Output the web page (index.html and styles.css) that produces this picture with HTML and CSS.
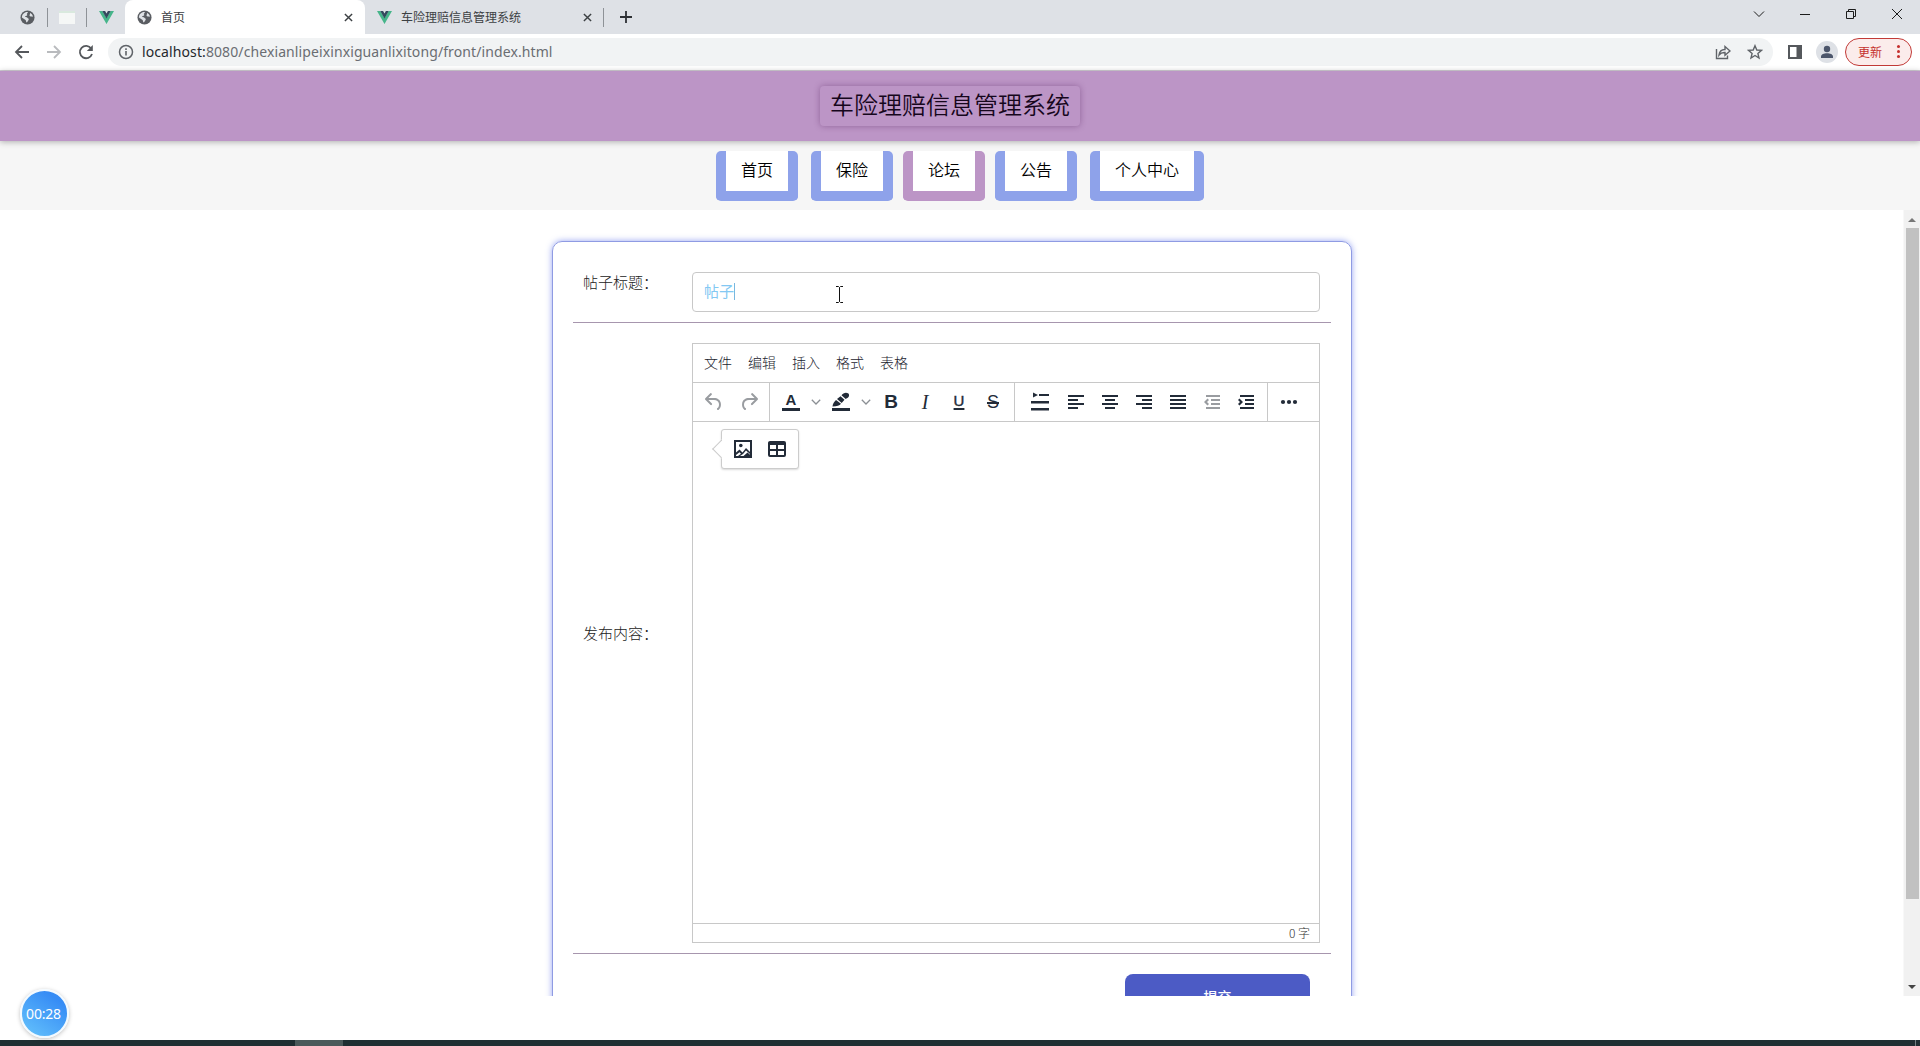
FILE: index.html
```html
<!DOCTYPE html>
<html lang="zh-CN">
<head>
  <meta charset="utf-8">
  <title>首页</title>
  <link rel="stylesheet" href="styles.css">
</head>
<body>
  <svg class="sprite">
    <symbol id="globe" viewBox="0 0 16 16"><circle cx="8" cy="8" r="7.500" fill="#5a5d62"/><path d="M3 4.500C5 2.500 7 2 8.500 2.300c-.2 1-1.300 1.300-1.200 2.200.9.400.6 1.500-.4 1.600-.7.600-1.500.4-1.600 1.300 1.200.2 2.800.1 3.100 1.500 1 .5 1.200 1.100.6 2-.8.600-.9 1.800-1.900 2.500-.9-.5-.3-2-1.200-2.800C4.700 9.800 3.200 9 2 8c0-1.400.3-2.500 1-3.500zM10.500 3c1.800.8 3 2.300 3.300 4-1 .5-1.400-.3-2.300 0-1-.2-1.600-1-1.200-1.900.6-.5.500-1.300.2-2.100z" fill="#dfe2e6"/></symbol>
    <symbol id="vue" viewBox="0 0 16 16"><path d="M0 1h3.500L8 8.500 12.500 1H16L8 15z" fill="#46b58a"/><path d="M3.500 1h3L8 3.600 9.500 1h3L8 9z" fill="#34495e"/></symbol>
    <symbol id="close" viewBox="0 0 10 10"><path d="M1 1l8 8M9 1L1 9" stroke="#3c4043" stroke-width="1.600"/></symbol>
    <symbol id="down" viewBox="0 0 10 10"><path d="M.8 2.800L5 7l4.200-4.200" fill="none" stroke="#8b8f94" stroke-width="1.300"/></symbol>
  </svg>

  <!-- Browser tabs -->
  <div class="tabs">
    <div class="pin"><svg width="15" height="15"><use href="#globe"/></svg></div>
    <div class="pin"><span class="sheet"></span></div>
    <div class="pin last"><svg width="15" height="15"><use href="#vue"/></svg></div>
    <div class="tab active">
      <svg width="15" height="15"><use href="#globe"/></svg><span>首页</span>
      <svg width="9" height="9"><use href="#close"/></svg>
    </div>
    <div class="tab">
      <svg width="15" height="15"><use href="#vue"/></svg><span>车险理赔信息管理系统</span>
      <svg width="9" height="9"><use href="#close"/></svg>
    </div>
    <div class="plus"><svg width="12" height="12" viewBox="0 0 12 12"><path d="M6 0v12M0 6h12" stroke="#2d3034" stroke-width="1.800"/></svg></div>
    <div class="win">
      <svg width="12" height="12" viewBox="0 0 12 12"><path d="M1 3.500l5 5 5-5"/></svg>
      <svg width="12" height="12" viewBox="0 0 12 12"><path d="M1 6.500h10"/></svg>
      <svg width="12" height="12" viewBox="0 0 12 12"><path d="M1.500 3.500h7v7h-7zM3.500 3.500v-2h7v7h-2"/></svg>
      <svg width="12" height="12" viewBox="0 0 12 12"><path d="M1 1l10 10M11 1L1 11"/></svg>
    </div>
  </div>

  <!-- Address bar -->
  <div class="toolbar">
    <svg class="nav-btn" width="16" height="16" viewBox="0 0 16 16"><path d="M15 8H2M8 2L2 8l6 6"/></svg>
    <svg class="nav-btn off" width="16" height="16" viewBox="0 0 16 16"><path d="M1 8h13M8 2l6 6-6 6"/></svg>
    <svg class="nav-btn" width="16" height="16" viewBox="0 0 16 16"><path d="M13.200 4.500A6.200 6.200 0 1 0 14 10"/><path d="M14.800 1v6h-6z" fill="#55585c" stroke="none"/></svg>
    <div class="address">
      <svg width="16" height="16" viewBox="0 0 16 16"><circle cx="8" cy="8" r="6.500" fill="none" stroke="#5f6368" stroke-width="1.500"/><path d="M8 7v4.500M8 4.300v1.600" stroke="#5f6368" stroke-width="1.600"/></svg>
      <span class="url"><b>localhost:</b>8080/chexianlipeixinxiguanlixitong/front/index.html</span>
      <svg class="share" width="16" height="16" viewBox="0 0 16 16"><path d="M1.500 5v9.500h11v-3M4 11c.5-4 3-5.500 6-5.500V2.500l5 4.500-5 4.300V8.500C7 8.300 5.500 9 4 11z"/></svg>
      <svg class="star" width="16" height="16" viewBox="0 0 16 16"><path d="M8 1.700l1.800 4.300 4.700.4-3.600 3 1.100 4.600L8 11.500 4 14l1.100-4.600-3.600-3 4.700-.4z"/></svg>
    </div>
    <svg class="panel" width="14" height="14" viewBox="0 0 14 14"><path d="M0 0h14v14H0zM2 2v10h6.500V2z" fill="#55585c" fill-rule="evenodd"/></svg>
    <svg class="avatar" width="22" height="22" viewBox="0 0 22 22"><circle cx="11" cy="11" r="11" fill="#dee1e6"/><circle cx="11" cy="8" r="3.200" fill="#4c566b"/><path d="M5 17v-1.500c0-4.500 12-4.500 12 0V17z" fill="#4c566b"/></svg>
    <div class="update">更新<i></i></div>
  </div>

  <div class="header"><h1>车险理赔信息管理系统</h1></div>

  <div class="menu">
    <a>首页</a>
    <a class="wide-gap">保险</a>
    <a class="current">论坛</a>
    <a>公告</a>
    <a class="wide-gap">个人中心</a>
  </div>

  <div class="frame">
    <div class="content">
      <div class="card">
        <div class="row title-row">
          <label>帖子标题：</label>
          <div class="input">帖子<span class="caret"></span>
            <svg class="ibeam" width="9" height="17" viewBox="0 0 9 17"><path d="M1 .5h2.500l1 1 1-1H8M4.500 1.500v14M1 16.500h2.500l1-1 1 1H8"/></svg>
          </div>
        </div>
        <div class="row editor-row">
          <label>发布内容：</label>
          <div class="editor">
            <div class="menubar"><span>文件</span><span>编辑</span><span>插入</span><span>格式</span><span>表格</span></div>
            <div class="tools">
              <div class="group history">
                <svg class="off" viewBox="0 0 24 24"><path d="M6.400 8H12c3.700 0 6.200 2 6.800 5.100.6 2.700-.4 5.600-2.300 6.800a1 1 0 0 1-1-1.800c1.100-.6 1.800-2.700 1.400-4.600-.5-2.100-2.100-3.500-4.900-3.500H6.400l3.300 3.300a1 1 0 1 1-1.400 1.400l-5-5a1 1 0 0 1 0-1.400l5-5a1 1 0 0 1 1.400 1.400L6.400 8z"/></svg>
                <svg class="off" viewBox="0 0 24 24"><path transform="matrix(-1 0 0 1 24 0)" d="M6.400 8H12c3.700 0 6.200 2 6.800 5.100.6 2.700-.4 5.600-2.300 6.800a1 1 0 0 1-1-1.800c1.100-.6 1.800-2.700 1.400-4.600-.5-2.100-2.100-3.500-4.900-3.500H6.400l3.300 3.300a1 1 0 1 1-1.400 1.400l-5-5a1 1 0 0 1 0-1.400l5-5a1 1 0 0 1 1.400 1.400L6.400 8z"/></svg>
              </div>
              <div class="group format">
                <span class="letter color">A</span>
                <svg class="arrow"><use href="#down"/></svg>
                <svg viewBox="0 0 24 24"><path d="M3 18h18v3H3zM3.500 16.500c.2-2.500 1.500-4.500 3.500-6.500l5 3.800c-1.500 2-4 2.700-8.500 2.700zM8 9l3.500-2.800 4 3.600-2.800 3.200zM12.500 5.300C14 3 17 1.800 19 3.300s1.300 4.300-2.300 5.700z"/></svg>
                <svg class="arrow"><use href="#down"/></svg>
                <span class="letter bold">B</span>
                <span class="letter italic">I</span>
                <span class="letter under">U</span>
                <span class="letter strike">S</span>
              </div>
              <div class="group align">
                <svg viewBox="0 0 24 24"><path d="M5 2.500l5 2.500-5 2.500zM11 4h10v2H11zM3 11h18v2.500H3zM3 18h18v2.500H3z"/></svg>
                <svg viewBox="0 0 24 24"><path d="M4 5h16v2H4zM4 9h10v2H4zM4 13h16v2H4zM4 17h10v2H4z"/></svg>
                <svg viewBox="0 0 24 24"><path d="M4 5h16v2H4zM7 9h10v2H7zM4 13h16v2H4zM7 17h10v2H7z"/></svg>
                <svg viewBox="0 0 24 24"><path d="M4 5h16v2H4zM10 9h10v2H10zM4 13h16v2H4zM10 17h10v2H10z"/></svg>
                <svg viewBox="0 0 24 24"><path d="M4 5h16v2H4zM4 9h16v2H4zM4 13h16v2H4zM4 17h16v2H4z"/></svg>
                <svg class="off" viewBox="0 0 24 24"><path d="M6 5h14v2H6zM11 9h9v2h-9zM11 13h9v2h-9zM6 17h14v2H6zM7.500 8.500L9 10l-2 2 2 2-1.500 1.500L4 12z"/></svg>
                <svg viewBox="0 0 24 24"><path d="M6 5h14v2H6zM11 9h9v2h-9zM11 13h9v2h-9zM6 17h14v2H6zM5.500 8.500L4 10l2 2-2 2 1.500 1.500L9 12z"/></svg>
              </div>
              <div class="group more">
                <svg viewBox="0 0 24 24"><circle cx="6" cy="12" r="2.100"/><circle cx="12" cy="12" r="2.100"/><circle cx="18" cy="12" r="2.100"/></svg>
              </div>
            </div>
            <div class="textarea">
              <div class="quickbar">
                <svg viewBox="0 0 24 24"><path fill-rule="evenodd" d="M3 3h18v18H3zM5 5v10.500l3.500-3 3 3L15 11l4 4V5zM5 18v1h2l3-2.200-1.500-1.500zM9 19h3.500l4-3.600 2.500 2.400V17l-4-3.500L12 17z"/><circle cx="9.800" cy="8.500" r="1.800"/></svg>
                <svg viewBox="0 0 24 24"><path fill-rule="evenodd" d="M5 4h14a2 2 0 0 1 2 2v12a2 2 0 0 1-2 2H5a2 2 0 0 1-2-2V6c0-1.100.9-2 2-2zM5 8v4h6V8zm8 0v4h6V8zm-8 6v4h6v-4zm8 0v4h6v-4z"/></svg>
              </div>
            </div>
            <div class="statusbar">0 字</div>
          </div>
        </div>
        <div class="actions"><button>提交</button></div>
      </div>
    </div>
    <div class="scrollbar"><i class="up"></i><div class="thumb"></div><i class="dn"></i></div>
  </div>

  <div class="bottom"></div>
  <div class="taskbar"><div class="task"></div><div class="peek"></div></div>
  <div class="timer">00:28</div>
</body>
</html>
```
FILE: styles.css
```css
* { box-sizing: border-box; }
body { margin: 0; height: 1046px; overflow: hidden; display: flex; flex-direction: column; background: #fff; font-family: "Noto Sans", "Noto Sans CJK SC", sans-serif; position: relative; }
svg { display: block; flex: none; }
.sprite { position: absolute; width: 0; height: 0; }

/* browser */
.tabs { height: 34px; flex: none; display: flex; background: #dee1e6; font-family: "Noto Sans CJK SC", sans-serif; font-size: 12px; color: #3c4043; }
.pin { width: 39px; margin: 8px 0 7px; border-right: 1px solid #8e9297; display: flex; align-items: center; justify-content: center; }
.pin:first-child { width: 48px; padding-left: 8px; }
.pin.last { border: 0; width: 38px; }
.pin svg { margin-top: -1px; }
.sheet { width: 16px; height: 13px; background: #f5f7f6; border-top: 2px solid #d9e9de; }
.tab { width: 239px; display: flex; align-items: center; padding: 0 12px 0 12px; }
.tab span { flex: 1; margin-left: 9px; line-height: 20px; }
.tab.active { width: 240px; background: #fff; border-radius: 8px 8px 0 0; }
.plus { border-left: 1px solid #8e9297; margin: 8px 0 7px -1px; padding: 3px 0 0 16px; }
.win { margin-left: auto; display: flex; gap: 34px; padding: 8px 17px 0 0; }
.win svg { fill: none; stroke: #1c1c1c; }
.toolbar { height: 37px; flex: none; display: flex; align-items: center; border-bottom: 1px solid #d3cfd6; padding: 0 8px 1px 14px; }
.nav-btn { margin-right: 16px; fill: none; stroke: #55585c; stroke-width: 1.8; }
.nav-btn.off { stroke: #b9bbbe; }
.address { width: 1665px; height: 28px; margin-right: 15px; margin-left: -2px; border-radius: 14px; background: #f1f3f4; display: flex; align-items: center; padding: 0 10px; }
.url { margin-left: 8px; font: 14px/20px "Noto Sans", sans-serif; color: #6a6d72; letter-spacing: .1px; }
.url b { font-weight: normal; color: #25282c; }
.share { margin-left: auto; }
.share, .star { fill: none; stroke: #5f6368; stroke-width: 1.4; }
.star { margin-left: 16px; }
.panel { margin-right: 14px; }
.avatar { margin-right: 7px; }
.update { width: 67px; height: 28px; border: 1px solid #c23a37; border-radius: 14px; background: #fbeceb; color: #c5302d; font: 12px/25px "Noto Sans CJK SC", sans-serif; padding-left: 12px; display: flex; align-items: center; }
.update i { width: 3px; height: 3px; border-radius: 50%; margin-left: 15px; background: #c5302d; box-shadow: 0 -5px #c5302d, 0 5px #c5302d; }

/* header */
.header { height: 70px; flex: none; background: #bc95c6; box-shadow: 0 1px 6px rgba(0,0,0,.3); position: relative; display: flex; justify-content: center; padding: 15px 20px 0 0; }
.header h1 { margin: 0; width: 260px; height: 40px; border-radius: 4px; text-align: center; font: 24px/36px "Noto Sans CJK SC", sans-serif; font-weight: 350; color: #16061c; box-shadow: 0 0 6px rgba(80,30,90,.4); }
.menu { height: 69px; flex: none; background: #f6f6f6; display: flex; justify-content: center; gap: 10px; padding-top: 10px; }
.menu a { height: 50px; border: 10px solid #8ea2ea; border-top: 0; border-radius: 5px; background: #fff; padding: 0 15px; font: 16px/36px "Noto Sans CJK SC", sans-serif; font-weight: 350; color: #000; }
.menu .current { border-color: #bc95c6; }
.menu .wide-gap { margin-left: 3px; }

/* page */
.frame { height: 786px; flex: none; display: flex; overflow: hidden; }
.content { flex: 1; padding: 31px 0 0; }
.card { width: 800px; margin: 0 0 0 552px; height: 810px; border: 1px solid #8f9be3; border-radius: 10px; box-shadow: 0 0 6px rgba(95,115,235,.65); padding: 9px 20px; }
.row { display: flex; border-bottom: 1px solid #a796ae; padding: 20px 10px 10px; font-size: 15px; color: #222; }
.row label { width: 109px; flex: none; line-height: 22px; font-family: "Noto Sans CJK SC", sans-serif; font-weight: 300; }
.title-row { height: 72px; padding-top: 21px; }
.title-row label { margin-top: -1px; }
.input { width: 628px; height: 40px; border: 1px solid #c8c8c8; border-radius: 4px; padding: 0 0 2px 11px; line-height: 36px; color: #83c8f3; font-family: "Noto Sans CJK SC", sans-serif; position: relative; display: flex; align-items: center; }
.caret { width: 1px; height: 17px; background: #78b8e0; }
.ibeam { position: absolute; left: 142px; top: 13px; fill: none; stroke: #111; }
.editor-row { height: 631px; align-items: center; }
.editor-row label { margin-top: -20px; }
.editor { width: 628px; height: 600px; border: 1px solid #c8c8c8; display: flex; flex-direction: column; }
.menubar { height: 39px; border-bottom: 1px solid #c8c8c8; display: flex; gap: 16px; padding-left: 11px; font: 14px/37px "Noto Sans CJK SC", sans-serif; font-weight: 300; color: #1a232e; }
.tools { height: 39px; border-bottom: 1px solid #c8c8c8; display: flex; }
.tools svg, .quickbar svg { width: 24px; height: 24px; fill: #222b38; }
.tools svg.off { fill: #999ca0; }
.group { display: flex; align-items: center; border-right: 1px solid #c8c8c8; }
.group.history { width: 77px; padding-left: 9px; gap: 11px; }
.format { width: 245px; padding-left: 9px; }
.tools .arrow { width: 10px; height: 10px; margin: 0 8px; }
.format .arrow + .bold { margin-left: -5px; }
.letter { width: 34px; flex: none; text-align: center; font: 18px/24px "Liberation Sans", sans-serif; color: #222b38; }
.color { width: 18px; height: 18px; line-height: 14px; margin: 0 3px; font-size: 15px; font-weight: bold; border-bottom: 3px solid #222b38; }
.bold { font-weight: bold; font-size: 19px; }
.italic { font-family: "Liberation Serif", serif; font-style: italic; font-size: 20px; }
.under { font-size: 15px; line-height: 16px; margin-top: -2px; text-decoration: underline; text-decoration-thickness: 2px; text-underline-offset: 2px; -webkit-text-stroke: .4px #222b38; }
.strike { font-size: 18px; text-decoration: line-through; text-decoration-thickness: 2px; }
.align { width: 253px; padding-left: 13px; gap: 10px; }
.align svg:first-child { margin-right: 2px; }
.group.more { border: 0; padding-left: 9px; }
.textarea { flex: 1; position: relative; }
.quickbar { position: absolute; left: 28px; top: 7px; width: 78px; height: 40px; border: 1px solid #ccc; border-radius: 3px; background: #fff; box-shadow: 0 1px 2px rgba(0,0,0,.15); display: flex; align-items: center; gap: 10px; padding-left: 9px; }
.quickbar::before { content: ""; position: absolute; left: -7px; top: 12px; width: 13px; height: 13px; border: 1px solid #ccc; border-width: 0 0 1px 1px; background: #fff; transform: rotate(45deg); clip-path: polygon(-10% -10%, 110% 110%, -10% 110%); }
.statusbar { height: 19px; border-top: 1px solid #c8c8c8; padding-right: 9px; text-align: right; font: 12px/17px "Noto Sans CJK SC", sans-serif; font-weight: 300; color: #333; }
.actions { display: flex; justify-content: flex-end; padding: 20px 21px 0 0; }
.actions button { width: 185px; height: 44px; border: 0; border-radius: 8px; background: #4c5bc5; color: #fff; font: 500 14px/42px "Noto Sans CJK SC", sans-serif; padding: 0; }

.scrollbar { width: 17px; background: #f1f1f1; display: flex; flex-direction: column; align-items: center; padding: 8px 0 7px; border-left: 1px solid #f8f8f8; }
.scrollbar i { border: 4px solid transparent; border-top: 0; border-bottom-color: #777; }
.scrollbar .dn { border-top: 4px solid #444; border-bottom: 0; margin-top: auto; }
.thumb { width: 13px; height: 671px; margin-top: 6px; background: #c1c1c1; }

.bottom { height: 44px; flex: none; }
.taskbar { height: 6px; flex: none; background: #1f2f33; display: flex; padding-left: 295px; }
.task { width: 48px; background: #4b5a5b; }
.peek { width: 1px; margin: 0 4px 0 auto; background: #738083; }
.timer { position: absolute; left: 20px; top: 989px; width: 49px; height: 49px; border: 2px solid #f3faff; border-radius: 50%; background: linear-gradient(35deg, #66c4fc, #368cf5 80%); color: #fff; font: 14px/45px "Noto Sans", sans-serif; text-align: center; text-indent: -2px; letter-spacing: -.2px; box-shadow: 0 1px 4px rgba(0,0,0,.25); }
```
